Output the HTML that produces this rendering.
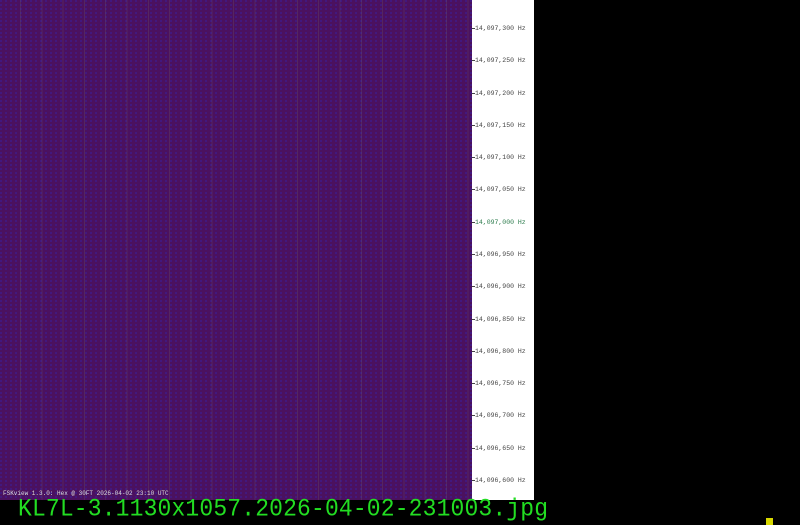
<!DOCTYPE html>
<html><head><style>
html,body{margin:0;padding:0;background:#000;width:800px;height:525px;overflow:hidden;position:relative;font-family:"Liberation Mono",monospace}
#wf{position:absolute;left:0;top:0;width:472px;height:500px;background:
repeating-linear-gradient(90deg,rgba(0,0,0,0) 0 20px,rgba(120,110,100,.22) 20px 21px,rgba(0,0,0,0) 21px 21.3px),
radial-gradient(circle at 1px 1px,rgba(50,40,190,.5) 0.7px,rgba(0,0,0,0) 1.1px) 0 0/5px 4px,
#4b115f}
#side{position:absolute;left:472px;top:0;width:62px;height:500px;background:#fff}
.l{position:absolute;left:472px;font-size:6.5px;color:#444;white-space:nowrap;line-height:6px}
.l::before{content:"";display:inline-block;width:3px;height:1px;background:#444;vertical-align:middle;margin-right:0}
#cap{position:absolute;left:3px;top:490px;font-size:6px;color:#ddd;white-space:nowrap}
#fn{position:absolute;left:18px;top:497px;font-size:23px;letter-spacing:.15px;color:#22dd22;line-height:23px;white-space:nowrap;transform:scaleY(1.1);transform-origin:0 0}
#sq{position:absolute;left:766px;top:518px;width:7px;height:7px;background:#d8d800}
</style></head><body>
<div id="wf"></div>
<div id="side"></div>
<div class="l" style="top:26px">14,097,300 Hz</div>
<div class="l" style="top:58px">14,097,250 Hz</div>
<div class="l" style="top:91px">14,097,200 Hz</div>
<div class="l" style="top:123px">14,097,150 Hz</div>
<div class="l" style="top:155px">14,097,100 Hz</div>
<div class="l" style="top:187px">14,097,050 Hz</div>
<div class="l" style="top:220px;color:#2a7a4a">14,097,000 Hz</div>
<div class="l" style="top:252px">14,096,950 Hz</div>
<div class="l" style="top:284px">14,096,900 Hz</div>
<div class="l" style="top:317px">14,096,850 Hz</div>
<div class="l" style="top:349px">14,096,800 Hz</div>
<div class="l" style="top:381px">14,096,750 Hz</div>
<div class="l" style="top:413px">14,096,700 Hz</div>
<div class="l" style="top:446px">14,096,650 Hz</div>
<div class="l" style="top:478px">14,096,600 Hz</div>
<div id="cap">FSKview 1.3.0: Hex @ 30FT 2026-04-02 23:10 UTC</div>
<div id="fn">KL7L-3.1130x1057.2026-04-02-231003.jpg</div>
<div id="sq"></div>
</body></html>
